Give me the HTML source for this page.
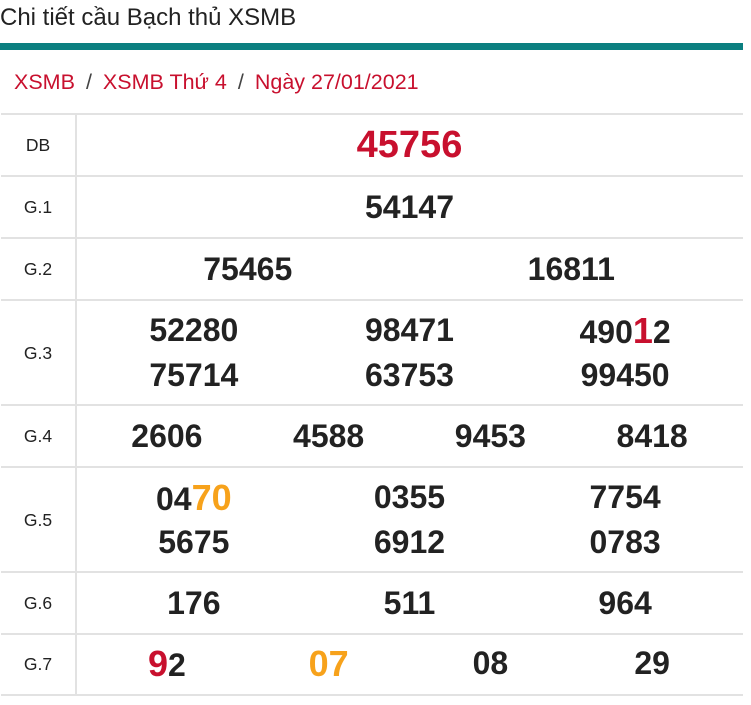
<!DOCTYPE html>
<html><head><meta charset="utf-8"><style>
*{margin:0;padding:0;box-sizing:border-box}
body{width:751px;height:705px;background:#fff;font-family:"Liberation Sans",sans-serif;color:#222;position:relative;overflow:hidden}
.h{position:absolute;left:0;top:4px;font-size:24px;color:#222}
.bar{position:absolute;left:0;top:43px;width:743px;height:7px;background:#0b7f80}
.bc{position:absolute;left:14px;top:70px;font-size:21.5px;color:#c8102e}
.bc span{color:#444;margin:0 11px}
.r{position:absolute;left:1px;width:742px;border-top:2px solid #e2e2e2;display:flex}
.l{width:76px;border-right:2px solid #e2e2e2;font-size:17.5px;display:flex;align-items:center;justify-content:center;color:#222}
.v{flex:1;display:flex;flex-wrap:wrap;align-content:center;padding:0 10px 0 9px}
.c{text-align:center;font-weight:bold;font-size:32px;line-height:43px;color:#222}
.red{color:#c8102e}.or{color:#f7a21b}
.big{font-size:36px}
</style></head><body>
<div class="h">Chi tiết cầu Bạch thủ XSMB</div>
<div class="bar"></div>
<div class="bc">XSMB<span>/</span>XSMB Thứ 4<span>/</span>Ngày 27/01/2021</div>

<div class="r" style="top:113px;height:63px"><div class="l">DB</div><div class="v"><div class="c red" style="width:100%;font-size:38px">45756</div></div></div>
<div class="r" style="top:175px;height:63px"><div class="l">G.1</div><div class="v"><div class="c" style="width:100%">54147</div></div></div>
<div class="r" style="top:237px;height:63px"><div class="l">G.2</div><div class="v"><div class="c" style="width:50%">75465</div><div class="c" style="width:50%">16811</div></div></div>
<div class="r" style="top:299px;height:106px"><div class="l">G.3</div><div class="v">
<div class="c" style="width:33.33%">52280</div><div class="c" style="width:33.33%">98471</div><div class="c" style="width:33.33%">490<span class="red big">1</span>2</div>
<div class="c" style="width:33.33%">75714</div><div class="c" style="width:33.33%">63753</div><div class="c" style="width:33.33%">99450</div></div></div>
<div class="r" style="top:404px;height:63px"><div class="l">G.4</div><div class="v"><div class="c" style="width:25%">2606</div><div class="c" style="width:25%">4588</div><div class="c" style="width:25%">9453</div><div class="c" style="width:25%">8418</div></div></div>
<div class="r" style="top:466px;height:106px"><div class="l">G.5</div><div class="v">
<div class="c" style="width:33.33%">04<span class="or big">70</span></div><div class="c" style="width:33.33%">0355</div><div class="c" style="width:33.33%">7754</div>
<div class="c" style="width:33.33%">5675</div><div class="c" style="width:33.33%">6912</div><div class="c" style="width:33.33%">0783</div></div></div>
<div class="r" style="top:571px;height:63px"><div class="l">G.6</div><div class="v"><div class="c" style="width:33.33%">176</div><div class="c" style="width:33.33%">511</div><div class="c" style="width:33.33%">964</div></div></div>
<div class="r" style="top:633px;height:63px;border-bottom:2px solid #e2e2e2"><div class="l">G.7</div><div class="v"><div class="c" style="width:25%"><span class="red big">9</span>2</div><div class="c or big" style="width:25%">07</div><div class="c" style="width:25%">08</div><div class="c" style="width:25%">29</div></div></div>
</body></html>
